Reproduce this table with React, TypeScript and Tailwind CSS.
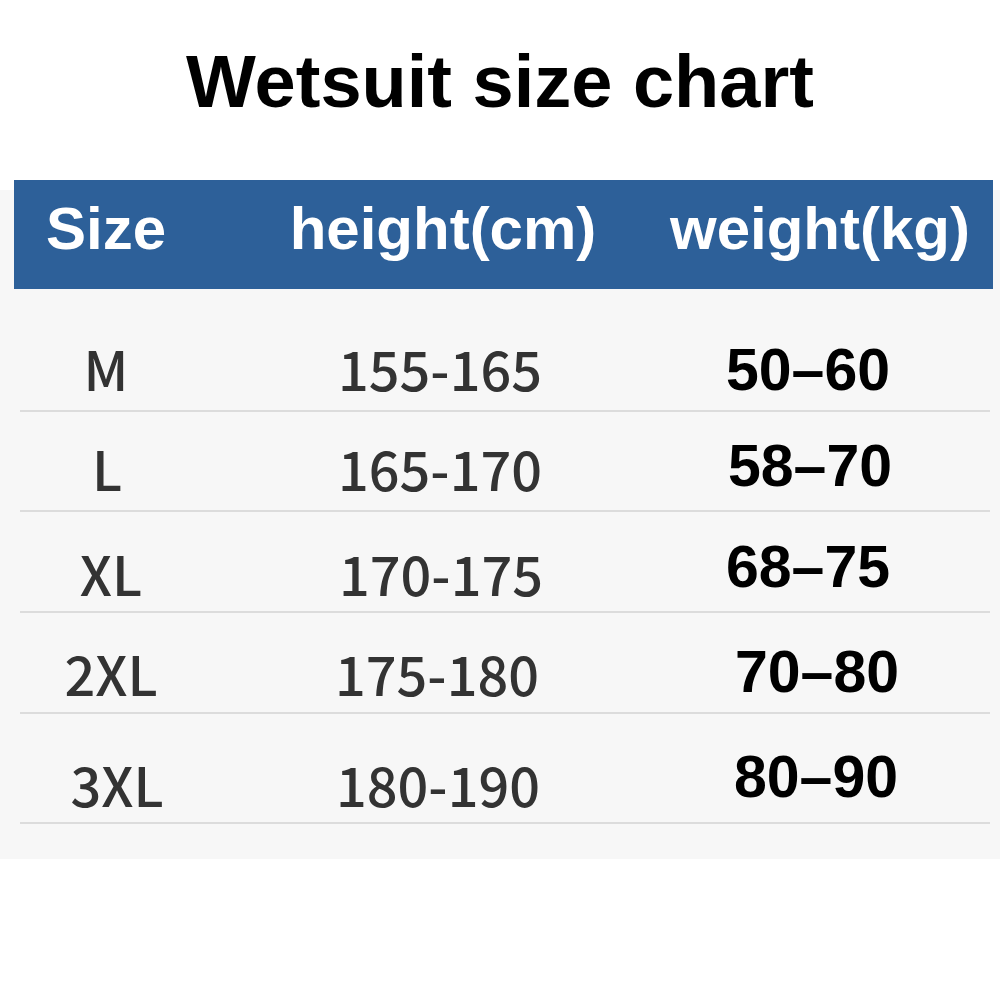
const rows = [
  {
    size: "M",
    height: "155-165",
    weight: "50–60",
    rowCls: "h-[123px]",
    grayTop: "mt-[52px]",
    weightTop: "mt-[52px]",
    sizeCls: "",
    heightCls: "",
    weightCls: "pr-[4px]",
  },
  {
    size: "L",
    height: "165-170",
    weight: "58–70",
    rowCls: "h-[100px]",
    grayTop: "mt-[29px]",
    weightTop: "mt-[25px]",
    sizeCls: "pl-[2px]",
    heightCls: "",
    weightCls: "",
  },
  {
    size: "XL",
    height: "170-175",
    weight: "68–75",
    rowCls: "h-[101px]",
    grayTop: "mt-[34px]",
    weightTop: "mt-[26px]",
    sizeCls: "pl-[10px]",
    heightCls: "pl-[2px]",
    weightCls: "pr-[4px]",
  },
  {
    size: "2XL",
    height: "175-180",
    weight: "70–80",
    rowCls: "h-[101px]",
    grayTop: "mt-[33px]",
    weightTop: "mt-[30px]",
    sizeCls: "pl-[10px]",
    heightCls: "pr-[6px]",
    weightCls: "pl-[14px]",
  },
  {
    size: "3XL",
    height: "180-190",
    weight: "80–90",
    rowCls: "h-[110px]",
    grayTop: "mt-[43px]",
    weightTop: "mt-[34px]",
    sizeCls: "pl-[22px]",
    heightCls: "pr-[4px]",
    weightCls: "pl-[12px]",
  },
];

const gray = "font-['Noto_Sans_CJK_SC','Noto_Sans',sans-serif] font-medium text-[54px] leading-none text-[#333333]";
const bold = "font-['Liberation_Sans',Arial,sans-serif] font-bold leading-none";

function App() {
  return (
    <div className="w-[1000px] h-[1000px] bg-white overflow-hidden">
      <h1 className={`${bold} text-[74px] text-black text-center pt-[45px] h-[180px]`}>
        Wetsuit size chart
      </h1>

      <div className="h-[679px] bg-[linear-gradient(to_bottom,#ffffff_10px,#f7f7f7_10px)]">
        <div className="ml-[14px] mr-[7px] h-[109px] bg-[#2d6099] flex items-start pt-[19px] text-white">
          <div className={`${bold} text-[60px] w-[184px] text-center`}>Size</div>
          <div className={`${bold} text-[60px] w-[472px] pl-[18px] text-center`}>height(cm)</div>
          <div className={`${bold} text-[60px] w-[300px] text-center`}>weight(kg)</div>
        </div>

        <div className="ml-[20px] mr-[10px]">
          {rows.map((r, i) => (
            <div
              key={"row-" + i}
              className={`${r.rowCls} flex items-start border-b-2 border-[#dcdcdc]`}
            >
              <div className={`w-[172px] flex justify-center ${r.grayTop} ${r.sizeCls}`}>
                <span className={gray}>{r.size}</span>
              </div>
              <div className={`w-[496px] flex justify-center ${r.grayTop} ${r.heightCls}`}>
                <span className={gray}>{r.height}</span>
              </div>
              <div className={`w-[244px] flex justify-center ${r.weightTop} ${r.weightCls}`}>
                <span className={`${bold} text-[59px] text-black`}>{r.weight}</span>
              </div>
            </div>
          ))}
        </div>
      </div>
    </div>
  );
}

export default App;
